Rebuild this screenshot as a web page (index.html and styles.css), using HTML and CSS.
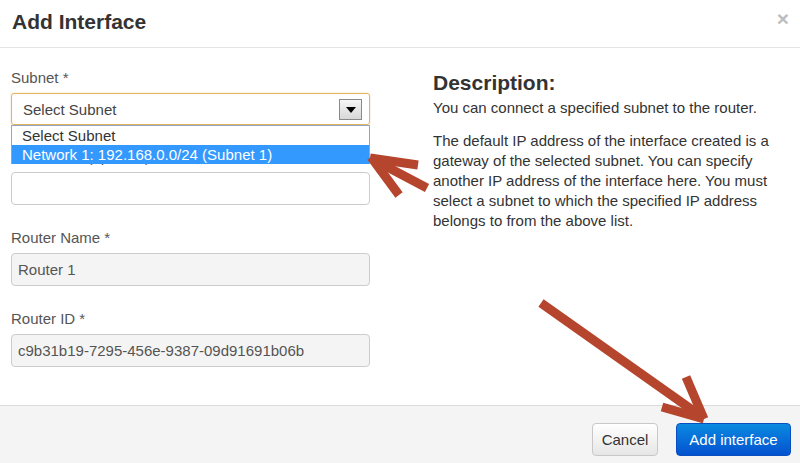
FILE: index.html
```html
<!DOCTYPE html>
<html>
<head>
<meta charset="utf-8">
<link rel="stylesheet" href="styles.css">
</head>
<body>
<div class="modal">
  <div class="modal-header">
    <h3 class="title">Add Interface</h3>
    <span class="close">×</span>
  </div>
  <div class="modal-body">
    <div class="left">
      <div class="group group-select">
        <label class="label">Subnet *</label>
        <div class="select">
          <span class="select-text">Select Subnet</span>
          <span class="select-btn"><span class="tri"></span></span>
          <div class="dropdown">
            <div class="option">Select Subnet</div>
            <div class="option option-active">Network 1: 192.168.0.0/24 (Subnet 1)</div>
          </div>
        </div>
      </div>
      <div class="group">
        <label class="label">IP Address (optional)</label>
        <div class="input"></div>
      </div>
      <div class="group">
        <label class="label">Router Name *</label>
        <div class="input input-ro">Router 1</div>
      </div>
      <div class="group">
        <label class="label">Router ID *</label>
        <div class="input input-ro">c9b31b19-7295-456e-9387-09d91691b06b</div>
      </div>
    </div>
    <div class="right">
      <h3 class="desc-title">Description:</h3>
      <p class="desc">You can connect a specified subnet to the router.</p>
      <p class="desc">The default IP address of the interface created is a gateway of the selected subnet. You can specify another IP address of the interface here. You must select a subnet to which the specified IP address belongs to from the above list.</p>
    </div>
  </div>
  <div class="modal-footer">
    <button class="btn btn-cancel">Cancel</button>
    <button class="btn btn-primary">Add interface</button>
  </div>
  <svg class="arrows" width="800" height="463" viewBox="0 0 800 463">
    <g stroke="#b5452d" stroke-width="9" fill="none" stroke-linecap="butt" stroke-linejoin="miter">
      <line x1="374" y1="160" x2="427" y2="188"/>
      <line x1="370" y1="158" x2="418" y2="165"/>
      <line x1="371" y1="157" x2="399" y2="195"/>
      <line x1="698" y1="414" x2="541" y2="303"/>
      <line x1="704" y1="419" x2="686" y2="377"/>
      <line x1="704" y1="419" x2="662" y2="407"/>
    </g>
  </svg>
</div>
</body>
</html>
```
FILE: styles.css
```css
html, body {
  margin: 0;
  padding: 0;
  background: #fff;
}
body {
  font-family: "Liberation Sans", Arial, sans-serif;
  font-size: 15px;
  color: #333;
}
.modal {
  position: relative;
  width: 800px;
  height: 463px;
  display: flex;
  flex-direction: column;
  overflow: hidden;
}
.modal-header {
  box-sizing: border-box;
  height: 48px;
  flex: none;
  border-bottom: 1px solid #e5e5e5;
  display: flex;
  justify-content: space-between;
  align-items: flex-start;
  padding: 10px 11px 0 12px;
}
.title {
  margin: 0;
  font-size: 21px;
  line-height: 24px;
  font-weight: bold;
  color: #333;
}
.close {
  font-size: 21px;
  font-weight: bold;
  line-height: 20px;
  color: #bdbdbd;
  margin-top: -1px;
}
.modal-body {
  flex: 1;
  display: flex;
  gap: 63px;
  padding: 18px 0 0 11px;
}
.left {
  width: 359px;
  flex: none;
}
.group {
  margin-bottom: 21px;
}
.group-select {
  margin-bottom: 20px;
}
.label {
  display: block;
  line-height: 20px;
  padding-top: 2px;
  margin-bottom: 5px;
  color: #555;
}
.select {
  position: relative;
  box-sizing: border-box;
  height: 32px;
  border: 1px solid #e5b260;
  border-radius: 3px;
  box-shadow: 0 0 2px rgba(229, 170, 80, 0.45);
  display: flex;
  align-items: center;
  justify-content: space-between;
  padding: 1px 7px 0 11px;
}
.select-text {
  color: #444;
  line-height: 20px;
}
.select-btn {
  box-sizing: border-box;
  width: 23px;
  height: 21px;
  border: 1px solid #8a8a8a;
  background: linear-gradient(#f6f6f6, #d8d8d8);
  display: flex;
  align-items: center;
  justify-content: center;
}
.tri {
  width: 0;
  height: 0;
  border-left: 5px solid transparent;
  border-right: 5px solid transparent;
  border-top: 6px solid #000;
  margin-top: 1px;
}
.dropdown {
  position: absolute;
  top: 31px;
  left: -1px;
  width: 359px;
  box-sizing: border-box;
  border: 1px solid #90a6c4;
  border-bottom: none;
  background: #fff;
}
.option {
  line-height: 19px;
  height: 19px;
  padding-left: 10px;
  color: #333;
  white-space: nowrap;
}
.option-active {
  background: #3399ff;
  color: #fff;
}
.input {
  box-sizing: border-box;
  height: 33px;
  border: 1px solid #ccc;
  border-radius: 4px;
  padding: 0 6px;
  line-height: 32px;
  color: #555;
  background: #fff;
}
.input-ro {
  background: #f4f4f4;
}
.right {
  width: 356px;
  flex: none;
  padding-top: 5px;
}
.desc-title {
  margin: 0 0 3px;
  font-size: 21px;
  line-height: 24px;
  font-weight: bold;
  color: #333;
}
.desc {
  margin: 0 0 13px;
  line-height: 20px;
  color: #333;
}
.modal-footer {
  flex: none;
  box-sizing: border-box;
  height: 58px;
  border-top: 1px solid #dcdcdc;
  background: #f4f4f4;
  display: flex;
  justify-content: flex-end;
  align-items: flex-start;
  gap: 18px;
  padding: 17px 9px 0 0;
}
.btn {
  box-sizing: border-box;
  height: 33px;
  border-radius: 4px;
  font-family: "Liberation Sans", Arial, sans-serif;
  font-size: 15px;
  padding: 0;
  text-align: center;
}
.btn-cancel {
  width: 66px;
  color: #333;
  border: 1px solid #c8c8c8;
  background: linear-gradient(#ffffff, #e6e6e6);
}
.btn-primary {
  width: 115px;
  color: #fff;
  border: 1px solid #0a4fc0;
  background: linear-gradient(#0a8ae0, #0452cf);
}
.arrows {
  position: absolute;
  top: 0;
  left: 0;
  pointer-events: none;
}
```
